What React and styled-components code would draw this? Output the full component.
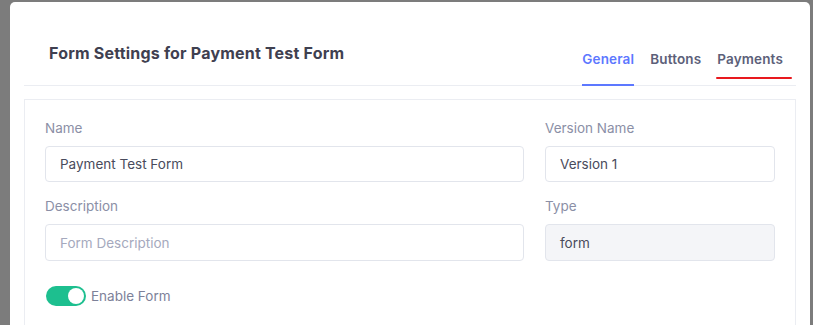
import styled, { createGlobalStyle } from 'styled-components';

const GlobalStyle = createGlobalStyle`
  body {
    margin: 0;
    background: #7c7c7c;
    font-family: "Inter", "Open Sans", sans-serif;
  }
`;

const Backdrop = styled.div`
  height: 325px;
  padding: 2px 3px 0 10px;
  box-sizing: border-box;
  overflow: hidden;
`;

const Modal = styled.div`
  background: #ffffff;
  border-radius: 5px 5px 0 0;
  height: 100%;
  padding: 0 14px;
  box-sizing: border-box;
`;

const Header = styled.div`
  height: 84px;
  display: flex;
  justify-content: space-between;
  border-bottom: 1px solid #ebedf2;
  box-sizing: border-box;
`;

const Title = styled.h2`
  margin: 0;
  padding: 41px 0 0 25px;
  font-size: 16px;
  font-weight: 700;
  color: #3f4050;
  letter-spacing: 0.2px;
`;

const Tabs = styled.nav`
  display: flex;
  align-items: flex-end;
  gap: 16px;
  padding-right: 13px;
`;

const Tab = styled.a`
  position: relative;
  display: block;
  padding: 0 0 17px;
  font-size: 13.5px;
  font-weight: 600;
  letter-spacing: 0.15px;
  color: ${(p) => (p.$active ? '#5d78ff' : '#5c6079')};
  border-bottom: 2px solid ${(p) => (p.$active ? '#5d78ff' : 'transparent')};
  margin-bottom: -1px;
  text-decoration: none;
`;

const Mark = styled.span`
  position: absolute;
  left: -1px;
  right: -9px;
  bottom: 5px;
  height: 2px;
  background: #e8191e;
  border-radius: 1px;
`;

const Card = styled.div`
  margin-top: 13px;
  border: 1px solid #ebedf2;
  border-bottom: none;
  padding: 18px 20px 30px;
  display: grid;
  grid-template-columns: 1fr 230px;
  column-gap: 21px;
  row-gap: 14px;
`;

const Field = styled.div`
  display: flex;
  flex-direction: column;
`;

const Label = styled.label`
  font-size: 13.5px;
  line-height: 20px;
  color: #8b8fa6;
  margin-bottom: 8px;
`;

const Input = styled.div`
  height: ${(p) => (p.$tall ? '37px' : '36px')};
  border: 1px solid #e2e5ec;
  border-radius: 4px;
  box-sizing: border-box;
  padding: 0 14px;
  display: flex;
  align-items: center;
  font-size: 13.5px;
  color: ${(p) => (p.$placeholder ? '#a5a9bd' : '#494b5c')};
  background: ${(p) => (p.$disabled ? '#f4f5f8' : '#ffffff')};
`;

const ToggleRow = styled.div`
  grid-column: 1 / -1;
  display: flex;
  align-items: center;
  gap: 5px;
  margin-top: 11px;
  font-size: 13.5px;
  color: #7d8199;
`;

const Switch = styled.span`
  position: relative;
  width: 40px;
  height: 20px;
  border-radius: 10px;
  background: #1dbf8f;
  margin-left: 1px;

  &::after {
    content: '';
    position: absolute;
    right: 2px;
    top: 2px;
    width: 16px;
    height: 16px;
    border-radius: 50%;
    background: #ffffff;
  }
`;

export default function App() {
  return (
    <>
      <GlobalStyle />
      <Backdrop>
        <Modal>
          <Header>
            <Title>Form Settings for Payment Test Form</Title>
            <Tabs>
              <Tab $active>General</Tab>
              <Tab>Buttons</Tab>
              <Tab>
                Payments
                <Mark />
              </Tab>
            </Tabs>
          </Header>
          <Card>
            <Field>
              <Label>Name</Label>
              <Input>Payment Test Form</Input>
            </Field>
            <Field>
              <Label>Version Name</Label>
              <Input>Version 1</Input>
            </Field>
            <Field>
              <Label>Description</Label>
              <Input $tall $placeholder>Form Description</Input>
            </Field>
            <Field>
              <Label>Type</Label>
              <Input $tall $disabled>form</Input>
            </Field>
            <ToggleRow>
              <Switch />
              Enable Form
            </ToggleRow>
          </Card>
        </Modal>
      </Backdrop>
    </>
  );
}
